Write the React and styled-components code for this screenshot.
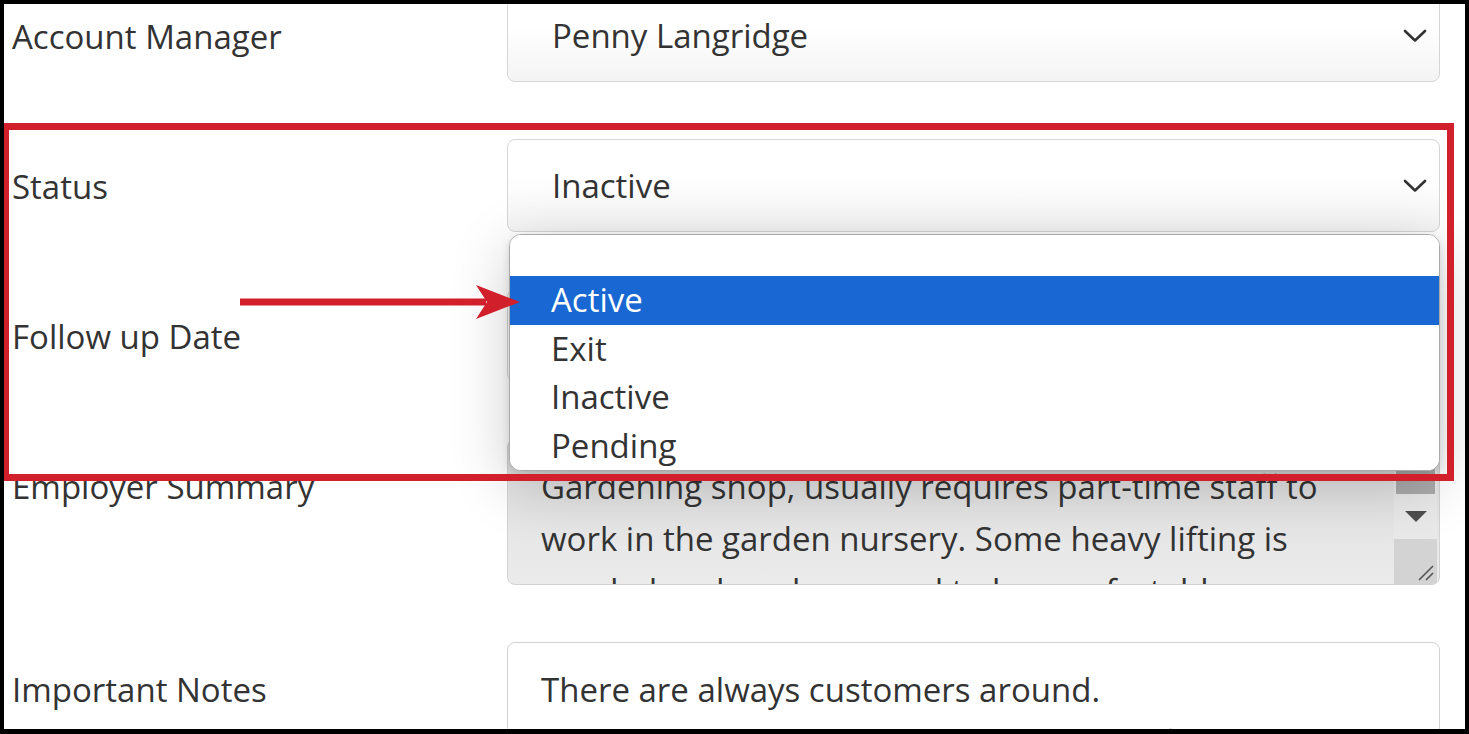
import React from "react";
import styled, { createGlobalStyle } from "styled-components";

const GlobalStyle = createGlobalStyle`
  html, body {
    margin: 0;
    padding: 0;
    background: #000;
  }
  body {
    font-family: "Open Sans", "Noto Sans", sans-serif;
    color: #333;
  }
`;

const Frame = styled.div`
  position: relative;
  width: 1469px;
  height: 734px;
  box-sizing: border-box;
  border: solid #000;
  border-width: 4px 4px 5px 4px;
  background: #fff;
  overflow: hidden;
`;

const Form = styled.div`
  display: flex;
  flex-direction: column;
  gap: 57px;
  margin-top: -15px;
  padding: 0 25px 0 8px;
`;

const Row = styled.div`
  display: grid;
  grid-template-columns: 495px 933px;
  align-items: start;
`;

const Label = styled.div`
  padding-top: 22px;
  font-size: 33px;
  line-height: 52px;
  color: #333;
`;

const Field = styled.div`
  position: relative;
`;

const Select = styled.div`
  display: flex;
  align-items: center;
  justify-content: space-between;
  box-sizing: border-box;
  height: 93px;
  padding: 0 12px 0 44px;
  border: 1px solid #d6d6d6;
  border-radius: 8px;
  background: linear-gradient(#fff 40%, #f4f4f4);
  font-size: 33px;
  line-height: 52px;
  color: #333;
`;

const Input = styled(Select)`
  background: #fff;
`;

const Menu = styled.ul`
  position: absolute;
  top: calc(100% + 2px);
  left: 2px;
  right: 0;
  z-index: 5;
  margin: 0;
  padding: 0;
  list-style: none;
  background: #fff;
  border: 1px solid #a9a9a9;
  border-radius: 12px;
  box-shadow: 0 14px 60px rgba(0, 0, 0, 0.2), 0 3px 8px rgba(0, 0, 0, 0.12);
  overflow: hidden;
`;

const Option = styled.li`
  box-sizing: border-box;
  height: ${(p) => (p.$blank ? 41 : 48.5)}px;
  padding-left: 41px;
  font-size: 33px;
  line-height: 48px;
  background: ${(p) => (p.$selected ? "#1967d2" : "#fff")};
  color: ${(p) => (p.$selected ? "#fff" : "#333")};
`;

const TextBox = styled.div`
  display: flex;
  box-sizing: border-box;
  height: ${(p) => p.$height}px;
  border: 1px solid #d2d2d2;
  border-radius: 8px;
  overflow: hidden;
  background: ${(p) => (p.$muted ? "linear-gradient(#dedede, #ebebeb)" : "#fff")};
`;

const TextBody = styled.div`
  flex: 1;
  padding: 21px 0 0 33px;
  font-size: 33px;
  line-height: 52px;
  color: #333;
  white-space: nowrap;
`;

const Line = styled.div``;

const Scrollbar = styled.div`
  display: flex;
  flex-direction: column;
  width: 43px;
  margin-right: 2px;
  background: #e9e9e9;
`;

const ThumbTrack = styled.div`
  height: 54px;
  display: flex;
  align-items: flex-end;
  padding: 0 2px;
`;

const Thumb = styled.div`
  flex: 1;
  height: 30px;
  background: #ababab;
`;

const ArrowButton = styled.div`
  height: 45px;
  display: flex;
  align-items: center;
  justify-content: center;
`;

const Corner = styled.div`
  flex: 1;
  display: flex;
  align-items: flex-end;
  justify-content: flex-end;
  padding: 0 3px 3px 0;
  background: #d3d3d3;
`;

const Callout = styled.div`
  position: absolute;
  left: -2px;
  top: 119px;
  width: 1452px;
  height: 358px;
  box-sizing: border-box;
  border: 7px solid #d1202b;
  z-index: 10;
  pointer-events: none;
`;

const Pointer = styled.svg`
  position: absolute;
  left: 236px;
  top: 281px;
  z-index: 10;
`;

const Chevron = () => (
  <svg width="24" height="14" viewBox="0 0 24 14">
    <path d="M2 2 L12 11.5 L22 2" fill="none" stroke="#333" strokeWidth="2.6" strokeLinecap="round" strokeLinejoin="round" />
  </svg>
);

const statuses = ["Active", "Exit", "Inactive", "Pending"];

export default function App() {
  return (
    <>
      <GlobalStyle />
      <Frame>
        <Form>
          <Row>
            <Label>Account Manager</Label>
            <Field>
              <Select>
                <span>Penny Langridge</span>
                <Chevron />
              </Select>
            </Field>
          </Row>
          <Row>
            <Label>Status</Label>
            <Field>
              <Select>
                <span>Inactive</span>
                <Chevron />
              </Select>
              <Menu>
                <Option $blank />
                {statuses.map((s) => (
                  <Option key={s} $selected={s === "Active"}>
                    {s}
                  </Option>
                ))}
              </Menu>
            </Field>
          </Row>
          <Row>
            <Label>Follow up Date</Label>
            <Field>
              <Input />
            </Field>
          </Row>
          <Row>
            <Label>Employer Summary</Label>
            <Field>
              <TextBox $height={146} $muted>
                <TextBody>
                  <Line>Gardening shop, usually requires part-time staff to</Line>
                  <Line>work in the garden nursery. Some heavy lifting is</Line>
                  <Line>needed and workers need to be comfortable</Line>
                </TextBody>
                <Scrollbar>
                  <ThumbTrack>
                    <Thumb />
                  </ThumbTrack>
                  <ArrowButton>
                    <svg width="22" height="11" viewBox="0 0 22 11">
                      <path d="M0 0 H22 L11 11 Z" fill="#4d4d4d" />
                    </svg>
                  </ArrowButton>
                  <Corner>
                    <svg width="20" height="20" viewBox="0 0 20 20">
                      <path d="M19 5 L5 19 M19 12 L12 19" stroke="#555" strokeWidth="1.6" />
                    </svg>
                  </Corner>
                </Scrollbar>
              </TextBox>
            </Field>
          </Row>
          <Row>
            <Label>Important Notes</Label>
            <Field>
              <TextBox $height={200}>
                <TextBody>
                  <Line>There are always customers around.</Line>
                  <Line>Ellen manages the garden centre most of the week.</Line>
                </TextBody>
              </TextBox>
            </Field>
          </Row>
        </Form>

        <Callout />
        <Pointer width="282" height="34" viewBox="0 0 282 34">
          <rect x="0" y="13.5" width="246" height="7" fill="#d1202b" />
          <path d="M236 0 L280 17 L236 34 L247 17 Z" fill="#d1202b" />
        </Pointer>
      </Frame>
    </>
  );
}
